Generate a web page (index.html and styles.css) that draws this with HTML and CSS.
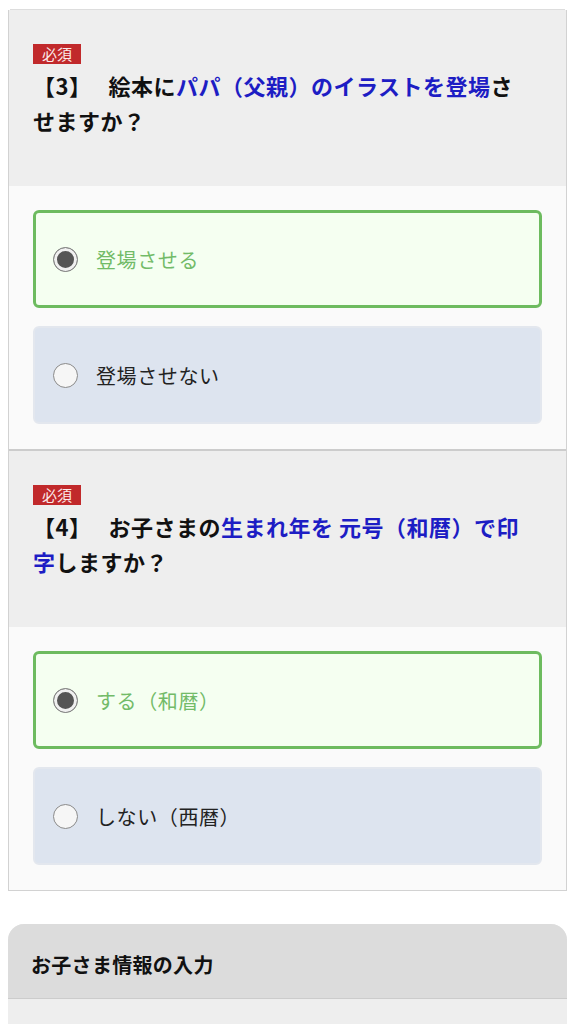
FILE: index.html
```html
<!DOCTYPE html>
<html lang="ja">
<head>
    <meta charset="UTF-8">
    <meta name="viewport" content="width=device-width, initial-scale=1.0">
    <title>絵本オプション</title>
    <link rel="stylesheet" href="styles.css">
</head>
<body>
    <div class="page">
        <div class="question-box">
            <div class="q-head">
                <span class="badge">必須</span>
                <p class="q-text">【3】　 絵本に<span class="hl">パパ（父親）のイラストを登場</span>させますか？</p>
            </div>
            <div class="q-answers">
                <label class="option selected">
                    <span class="radio checked"></span>
                    <span class="opt-label">登場させる</span>
                </label>
                <label class="option">
                    <span class="radio"></span>
                    <span class="opt-label">登場させない</span>
                </label>
            </div>

            <div class="q-head divided">
                <span class="badge">必須</span>
                <p class="q-text">【4】　 お子さまの<span class="hl">生まれ年を 元号（和暦）で印字</span>しますか？</p>
            </div>
            <div class="q-answers">
                <label class="option selected">
                    <span class="radio checked"></span>
                    <span class="opt-label">する（和暦）</span>
                </label>
                <label class="option">
                    <span class="radio"></span>
                    <span class="opt-label">しない（西暦）</span>
                </label>
            </div>
        </div>

        <div class="card">
            <div class="card-head">お子さま情報の入力</div>
            <div class="card-body"></div>
        </div>
    </div>
</body>
</html>
```

FILE: styles.css
```css
body {
    margin: 0;
    background: #fff;
    font-family: "Noto Sans CJK JP", "Noto Sans", sans-serif;
    color: #111;
}

.page {
    padding: 8px 6px 0 8px;
}

.question-box {
    border: 1px solid #d2d2d2;
    border-top: 0;
    box-shadow: 0 -3px 0 -2px #ddd;
    background: #fafafa;
}

.q-head {
    background: #eee;
    padding: 34px 42px 48px 24px;
    margin-top: 2px;
}

.q-head.divided {
    border-top: 2px solid #ccc;
    margin-top: 0;
}

.badge {
    display: block;
    width: fit-content;
    background: #c1292b;
    color: #fbe9e9;
    font-size: 15px;
    line-height: 20px;
    padding: 0 9px;
    font-weight: 400;
}

.q-text {
    margin: 4px 0 0 0;
    font-size: 22px;
    font-weight: 700;
    line-height: 35px;
    letter-spacing: 0.5px;
}

.hl {
    color: #1d1dc4;
}

.q-answers {
    padding: 24px 24px 25px 24px;
    display: flex;
    flex-direction: column;
    gap: 18px;
}

.option {
    display: flex;
    align-items: center;
    height: 98px;
    box-sizing: border-box;
    border: 2px solid #e3e7ee;
    border-radius: 6px;
    background: #dde4ef;
    padding-left: 18px;
}

.option.selected {
    border: 3px solid #6dbb5f;
    background: #f5fff1;
    padding-left: 17px;
}

.radio {
    width: 25px;
    height: 25px;
    box-sizing: border-box;
    border-radius: 50%;
    border: 1.5px solid #8a8a8a;
    background: #f6f6f6;
    margin-right: 18px;
    flex: none;
}

.radio.checked {
    background: #555;
    box-shadow: inset 0 0 0 3px #f0f0f0;
    border-color: #888;
}

.opt-label {
    font-size: 20px;
    color: #222;
    letter-spacing: 0.6px;
}

.option.selected .opt-label {
    color: #72bb68;
}

.card {
    margin-top: 33px;
    border-radius: 16px 16px 0 0;
    overflow: hidden;
    background: #eee;
}

.card-head {
    background: #dcdcdc;
    height: 75px;
    box-sizing: border-box;
    border-bottom: 1px solid #ccc;
    padding: 26px 24px 0 23px;
    font-size: 20px;
    font-weight: 700;
    line-height: 30px;
    letter-spacing: 0.3px;
}

.card-body {
    height: 40px;
}
```
